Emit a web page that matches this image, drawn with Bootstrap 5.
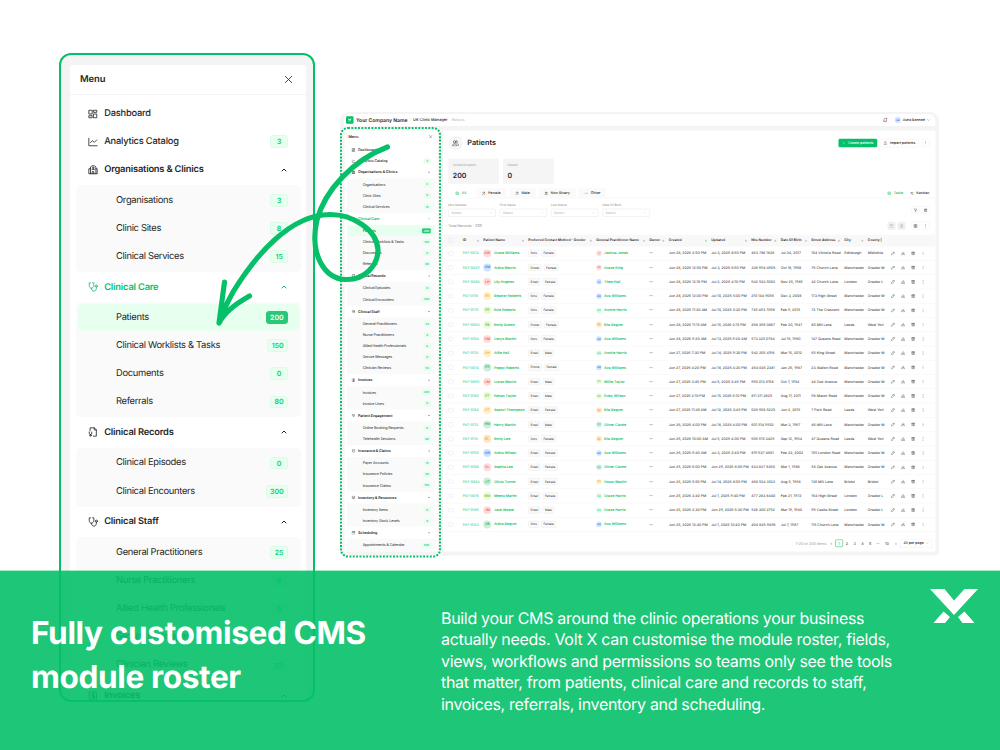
<!DOCTYPE html>
<html lang="en">
<head>
    <meta charset="UTF-8">
    <title>Volt X - Module Roster</title>
    <meta name="viewport" content="width=device-width, initial-scale=1">

    <!-- Bootstrap CSS -->
    <link href="https://cdn.jsdelivr.net/npm/bootstrap@5.3.2/dist/css/bootstrap.min.css" rel="stylesheet">

    <style>
        :root {
            --brand: #05c068;
            --ink: #262626;
            --shell: #f4f4f4;
        }

        body {
            font-family: Inter, 'Liberation Sans', sans-serif;
            color: var(--ink);
            background: #fff;
            text-rendering: geometricPrecision;
        }

        svg { display: block; flex: none; }

        .ico {
            fill: none;
            stroke: currentColor;
            stroke-width: 1.8;
            stroke-linecap: round;
            stroke-linejoin: round;
        }

        .stage { width: 1000px; height: 750px; }

        /* Side menu, sized in em so it can be shown at two scales */
        .side-menu { background: #fff; width: 23.6em; line-height: 1; }
        .menu-top { height: 3.05em; padding: .1em 1.25em 0 1em; border-bottom: .1em solid #f3f3f3; }
        .menu-top span { font-size: .94em; font-weight: 600; letter-spacing: -.01em; }
        .menu-top .ico { width: 1.1em; height: 1.1em; }
        .menu-list { padding: .45em .55em 0; }
        .menu-row { height: 2.815em; padding: 0 1.23em 0 1.2em; }
        .menu-row .ico { width: 1em; height: 1em; stroke-width: 2; }
        .menu-row .ico.chev { width: .6em; height: .6em; margin-right: .13em; stroke-width: 4; }
        .menu-label { font-size: .93em; font-weight: 500; margin-left: .72em; flex: 1; letter-spacing: -.022em; white-space: nowrap; }
        .menu-row.has-sub .menu-label { font-weight: 600; letter-spacing: -.02em; }
        .menu-row.current { color: var(--brand); }
        .menu-group { background: #fafafa; border-radius: .5em; padding: .15em 0; margin: .1em 0; }
        .menu-group .menu-row { padding-left: 4.05em; }
        .menu-group .menu-label { font-weight: 400; margin-left: 0; font-size: .94em; letter-spacing: -.034em; }
        .menu-group .menu-row.active { background: #e6ffef; border-radius: .5em; margin: 0 .2em; padding-left: 3.85em; padding-right: 1.03em; height: 2.75em; }
        .count {
            font-size: .7em;
            font-weight: 600;
            height: 1.8em;
            min-width: 2.6em;
            padding: 0 .5em;
            color: #16c96f;
            background: #e6ffef;
            border: .1em solid #dcfbe8;
            border-radius: .4em;
        }
        .active .count { background: #28c878; color: #fff; border-color: #28c878; }

        /* Enlarged menu */
        .zoom-panel {
            left: 59px; top: 53px; width: 256px; height: 648.5px;
            border: 2px solid var(--brand);
            border-radius: 12px;
            background: var(--shell);
            padding: 9.5px 0 0 9px;
        }
        .zoom-panel .side-menu { font-size: 10px; height: 640px; border-radius: 3px 3px 0 0; }

        /* Application window: laid out four times larger, then scaled down so hairlines stay thin */
        .app-scale { left: 340px; top: 112px; transform: scale(.25); transform-origin: 0 0; }
        .app-window {
            zoom: 4;
            width: 599px; height: 443.5px;
            background: var(--shell);
            border-radius: 9px 9px 4px 4px;
            padding: 2px 3.5px 3px 4px;
            font-size: 3.5px;
            line-height: 1;
        }
        .app-bar { height: 12px; background: #fff; border-radius: 7px 7px 0 0; padding: 0 5.5px 0 2px; }
        .app-body { margin-top: 4.5px; }
        .app-window .side-menu { font-size: 3.955px; height: 421px; margin-left: .5px; overflow: hidden; }
        .brand-tile { width: 7.5px; height: 7.5px; background: var(--brand); border-radius: 1.2px; }
        .company { font-size: 5.05px; font-weight: 600; margin-left: 2.5px; width: 54.5px; border-right: .5px solid #eee; white-space: nowrap; }
        .manager { font-size: 3.9px; font-weight: 500; margin-left: 2.5px; width: 39px; white-space: nowrap; }
        .crumb { color: #aaa; font-size: 3.3px; }
        .account { gap: 2px; font-size: 3.5px; font-weight: 500; }
        .face { border-radius: 50%; flex: none; font-weight: 500; }
        .work { background: #fff; width: 492.5px; height: 421px; margin-left: 5.5px; }
        .work-title { height: 25px; padding: 0 6px 0 5px; }
        .work-title .page-name { font-size: 7.3px; font-weight: 600; margin-left: 4.5px; }
        .round-ico { width: 14.5px; height: 14.5px; border-radius: 50%; background: #f6f6f6; }
        .btn-mini {
            font-size: 3.5px; line-height: 1; height: 8.6px; padding: 0 3.2px;
            border: .5px solid #eee; border-radius: 1.2px; font-weight: 500;
            display: inline-flex; align-items: center; gap: 2.6px; color: var(--ink);
            white-space: nowrap;
        }
        .btn-mini.go { background: var(--brand); border-color: var(--brand); color: #fff; }
        .box-btn { width: 8px; height: 8px; border: .5px solid #eee; border-radius: 1.2px; }
        .box-btn.off { background: #f1f1f1; color: #aaa; }
        .stat-row { padding: 3px 0 0 5px; gap: 4px; }
        .stat { width: 50.7px; height: 25.2px; background: #f5f5f5; border-radius: 1.5px; padding: 4.4px 4.5px; }
        .stat small { font-size: 3.1px; color: #999; display: block; }
        .stat b { font-size: 7px; font-weight: 600; display: block; margin-top: 5.5px; }
        .filter-tabs { height: 10px; margin-top: 4.5px; border-bottom: .5px solid #f0f0f0; padding: 0 6px 0 5px; gap: 3.2px; }
        .filter-tab { height: 10px; background: #fafafa; font-size: 3.6px; border-radius: 1.5px 1.5px 0 0; gap: 2.5px; font-weight: 500; }
        .filter-tab.on, .view-on { color: var(--brand); }
        .pick-row { padding: 5.5px 6px 0 5px; gap: 4px; height: 18.7px; }
        .pick { width: 47.4px; }
        .pick label { font-size: 3.1px; color: #888; display: block; height: 5px; line-height: 3px; }
        .pick div { height: 8px; border: .5px solid #e6e6e6; border-radius: 1px; padding: 0 3px 0 2.5px; color: #b5b5b5; font-size: 3.5px; }
        .total-row { padding: 0 6px 0 5px; height: 17.8px; color: #888; font-size: 3.6px; }

        /* Patient table */
        .trow {
            display: grid;
            grid-template-columns: 15.5px 20.5px 45px 68px 53px 19.5px 42.5px 40px 29.5px 30.5px 33px 23.5px 17.5px 52px;
            height: 14.27px;
            align-items: center;
            padding-left: 2px;
            border-bottom: .5px solid #f4f4f4;
            white-space: nowrap;
            font-size: 3.55px;
        }
        .trow > div { padding-left: 2px; }
        .trow.head-row { height: 11.7px; background: #f8f8f8; font-weight: 600; font-size: 3.35px; border: 0; }
        .head-row > div { display: flex; align-items: center; justify-content: space-between; padding-right: 2px; }
        .tick { width: 4.4px; height: 4.4px; border: .5px solid #e4e4e4; border-radius: .8px; margin-left: 3.2px; }
        .link-green { color: #10c46b; }
        .chip { border: .5px solid #ededed; background: #fafafa; border-radius: 1px; padding: 1.1px 1.8px; font-size: 3px; margin-right: 2.2px; }
        .pager { height: 14px; margin-top: 4.5px; padding-right: 3px; font-size: 3.7px; }
        .pager span { width: 7.8px; text-align: center; }
        .pager .total-note { width: auto; color: #999; margin-right: 1px; }
        .pager .ten { width: 10px; }
        .pager .now { border: .5px solid var(--brand); border-radius: 1px; color: var(--brand); height: 7.6px; line-height: 6.6px; }

        .over { left: 0; top: 0; }

        /* Bottom banner */
        .banner {
            left: 0; top: 570px; width: 1000px; height: 180px;
            background: rgba(5, 192, 104, .9);
            background-clip: padding-box;
            border-top: 1px solid rgba(5, 192, 104, .35);
            color: #fff;
            padding: 0 22px 0 31px;
        }
        .banner h1 { font-size: 31.6px; font-weight: 700; line-height: 43.5px; width: 410px; margin: 40px 0 0; letter-spacing: -.012em; }
        .banner p { font-size: 16px; line-height: 21.5px; margin: 36.5px 0 0; letter-spacing: -.02em; white-space: nowrap; }
        .banner svg { margin-top: 18px; }
    </style>
</head>

<body>

<!-- Icon set -->
<svg width="0" height="0" class="position-absolute">
    <symbol id="i-x" viewBox="0 0 24 24"><path d="M5 5l14 14M19 5L5 19"/></symbol>
    <symbol id="i-dash" viewBox="0 0 24 24"><path d="M3 3h7v9H3zM14 3h7v5h-7zM14 12h7v9h-7zM3 16h7v5H3z"/></symbol>
    <symbol id="i-chart" viewBox="0 0 24 24"><path d="M2 3v18h20M6 13l5-4 4 4 6-6"/></symbol>
    <symbol id="i-org" viewBox="0 0 24 24"><path d="M6 21V5l3-3h7l3 3v16M6 9H2v12h20V9h-3M10 21v-5h4v5M10 7h5M10 11h5M12.500 5v4"/></symbol>
    <symbol id="i-steth" viewBox="0 0 24 24"><path d="M6 2H3v6c0 4 2 7 5 7s6-3 6-7V2h-3M8 15c0 4 3 7 6 7s6-3 6-6v-3"/><circle cx="20" cy="10" r="2.500"/></symbol>
    <symbol id="i-file" viewBox="0 0 24 24"><path d="M5 9V2h10l5 5v15h-7M15 2v5h5M3 12v3c0 4 6 4 6 0v-3M6 18v1"/><circle cx="6" cy="20" r="2"/></symbol>
    <symbol id="i-bill" viewBox="0 0 24 24"><path d="M4 2h16v20H4zM15 7H10v5h5v5H9M12 5v14"/></symbol>
    <symbol id="i-heart" viewBox="0 0 24 24"><path d="M12 20L3 11c-3-6 5-10 9-4 4-6 12-2 9 4zM7 11h10"/></symbol>
    <symbol id="i-shield" viewBox="0 0 24 24"><path d="M5 4l7-2 7 2v10c0 4-4 7-7 8-3-1-7-4-7-8zM9 11h6"/></symbol>
    <symbol id="i-box" viewBox="0 0 24 24"><path d="M12 2l9 5v10l-9 5-9-5V7zM3 7l9 5 9-5M12 12v10"/></symbol>
    <symbol id="i-cal" viewBox="0 0 24 24"><path d="M3 5h18v16H3zM3 10h18M8 2v5M16 2v5"/></symbol>
    <symbol id="i-up" viewBox="0 0 24 24"><path d="M4 16l8-8 8 8"/></symbol>
    <symbol id="i-down" viewBox="0 0 24 24"><path d="M4 8l8 8 8-8"/></symbol>
    <symbol id="i-sort" viewBox="0 0 24 24"><path d="M8 8l4-5 4 5zM8 16l4 5 4-5z"/></symbol>
    <symbol id="i-users" viewBox="0 0 24 24"><circle cx="9" cy="8" r="4"/><path d="M2 21c0-9 14-9 14 0zM15 4c5 0 5 7 1 8M18 14c3 1 4 4 4 7"/></symbol>
    <symbol id="i-user" viewBox="0 0 24 24"><circle cx="12" cy="7" r="5"/><path d="M4 22c0-10 16-10 16 0"/></symbol>
    <symbol id="i-pen" viewBox="0 0 24 24"><path d="M3 21l2-7L17 2l5 5L10 19zM14 5l5 5"/></symbol>
    <symbol id="i-save" viewBox="0 0 24 24"><path d="M12 3v12M7 10l5 5 5-5M3 15v6h18v-6"/></symbol>
    <symbol id="i-load" viewBox="0 0 24 24"><path d="M12 15V3M7 8l5-5 5 5M3 15v6h18v-6"/></symbol>
    <symbol id="i-bin" viewBox="0 0 24 24"><path d="M3 6h18M5 6v15h14V6M9 6V2h6v4M10 10v7M14 10v7"/></symbol>
    <symbol id="i-more" viewBox="0 0 24 24"><path d="M12 4v.5M12 12v.5M12 20v.5"/></symbol>
    <symbol id="i-dots" viewBox="0 0 24 24"><path d="M3 12h1M11.500 12h1M20 12h1"/></symbol>
    <symbol id="i-plus" viewBox="0 0 24 24"><path d="M12 4v16M4 12h16"/></symbol>
    <symbol id="i-bell" viewBox="0 0 24 24"><path d="M4 18h16l-2-4V9c0-8-12-8-12 0v5zM10 22h4"/><circle cx="19" cy="4" r="2" stroke="#f5494f" fill="#f5494f"/></symbol>
    <symbol id="i-grid" viewBox="0 0 24 24"><path d="M3 3h18v18H3zM3 9h18M3 15h18M10 3v18"/></symbol>
    <symbol id="i-board" viewBox="0 0 24 24"><path d="M3 4h7v8H3zM14 4h7v16h-7z"/></symbol>
    <symbol id="i-funnel" viewBox="0 0 24 24"><path d="M3 3h18l-7 9v9l-4-3v-6z"/></symbol>
    <symbol id="i-logo" viewBox="0 0 48 34"><path fill="currentColor" d="M0 0h14.500l9.500 11.500L34.500 0H48L24 26zM3.500 34l10-11.500 6.500 5.500-5 6zM44.500 34l-10-11.500-6.500 5.500 4.500 6z"/></symbol>
</svg>

<div class="stage position-relative overflow-hidden">

    <div class="app-scale position-absolute">
        <div class="app-window">
            <div class="app-bar d-flex align-items-center">
                <div class="brand-tile d-flex align-items-center justify-content-center text-white"><svg width="4.400" height="3.400"><use href="#i-logo"/></svg></div>
                <span class="company">Your Company Name</span>
                <span class="manager">UK Clinic Manager</span>
                <span class="crumb">Patients</span>
                <div class="account d-flex align-items-center ms-auto" id="account"></div>
            </div>
            <div class="app-body d-flex">
                <div class="side-menu" data-menu="full"></div>
                <div class="work">
                    <div class="work-title d-flex align-items-center">
                        <div class="round-ico d-flex align-items-center justify-content-center"><svg class="ico" width="7" height="7"><use href="#i-users"/></svg></div>
                        <span class="page-name">Patients</span>
                        <div class="d-flex ms-auto" id="topActions" style="gap:2.5px"></div>
                    </div>
                    <div class="stat-row d-flex">
                        <div class="stat"><small>United Kingdom</small><b>200</b></div>
                        <div class="stat"><small>Ireland</small><b>0</b></div>
                    </div>
                    <div class="filter-tabs d-flex" id="tabs"></div>
                    <div class="pick-row d-flex" id="picks"></div>
                    <div class="total-row d-flex align-items-center" id="total"></div>
                    <div id="table"></div>
                    <div class="pager d-flex align-items-center justify-content-end">
                        <span class="total-note">1-20 of 200 items</span>
                        <span>‹</span><span class="now">1</span><span>2</span><span>3</span><span>4</span><span>5</span><span>···</span><span class="ten">10</span><span>›</span>
                        <div class="btn-mini">20 per page <svg class="ico" width="2.500" height="2.500"><use href="#i-down"/></svg></div>
                    </div>
                </div>
            </div>
        </div>
    </div>

    <div class="zoom-panel position-absolute overflow-hidden">
        <div class="side-menu" data-menu="short"></div>
    </div>

    <!-- Callout outline and arrow -->
    <svg class="over position-absolute" width="1000" height="750" fill="none" stroke="#05c068">
        <rect x="341" y="128" width="99" height="428.500" rx="7" stroke-width="2" stroke-dasharray="1.900 1.450"/>
        <path d="M387.500 147C353 160 325 190 317 220C309 255 325 279 346 279.500C365 280 378 265 378 250C377 229 352 214.500 330 214.500C290 214.500 255 256 233 292C227 303 222 313 219 323M224.500 282L219 323C225 311 237 303 249.500 296" stroke-width="5.200" stroke-linecap="round" stroke-linejoin="round"/>
    </svg>

    <div class="banner position-absolute d-flex align-items-start">
        <h1>Fully customised CMS<br>module roster</h1>
        <p>Build your CMS around the clinic operations your business<br>actually needs. Volt X can customise the module roster, fields,<br>views, workflows and permissions so teams only see the tools<br>that matter, from patients, clinical care and records to staff,<br>invoices, referrals, inventory and scheduling.</p>
        <svg class="ms-auto" width="48" height="34"><use href="#i-logo"/></svg>
    </div>
</div>

<!-- Bootstrap JS Bundle -->
<script src="https://cdn.jsdelivr.net/npm/bootstrap@5.3.2/dist/js/bootstrap.bundle.min.js"></script>

<script>
    const icon = (name, size, cls = '') =>
        `<svg class="ico ${cls}" ${size ? `width="${size}" height="${size}"` : ''}><use href="#i-${name}"/></svg>`;

    const menu = [
        ['dash', 'Dashboard'],
        ['chart', 'Analytics Catalog', 3],
        ['org', 'Organisations & Clinics', [['Organisations', 3], ['Clinic Sites', 8], ['Clinical Services', 15]]],
        ['steth', 'Clinical Care', [['Patients', 200], ['Clinical Worklists & Tasks', 150], ['Documents', 0], ['Referrals', 80]]],
        ['file', 'Clinical Records', [['Clinical Episodes', 0], ['Clinical Encounters', 300]]],
        ['steth', 'Clinical Staff', [['General Practitioners', 25], ['Nurse Practitioners', 8], ['Allied Health Professionals', 6], ['Secure Messages', 0], ['Clinician Reviews', 53]]],
        ['bill', 'Invoices', [['Invoices', 200], ['Invoice Lines', 0]]],
        ['heart', 'Patient Engagement', [['Online Booking Requests', 0], ['Telehealth Sessions', 80]]],
        ['shield', 'Insurance & Claims', [['Payer Accounts', 15], ['Insurance Policies', 50], ['Insurance Claims', 150]]],
        ['box', 'Inventory & Resources', [['Inventory Items', 0], ['Inventory Stock Levels', 0]]],
        ['cal', 'Scheduling', [['Appointments & Calendar', 500]]]
    ];

    const count = n => `<span class="count d-flex align-items-center justify-content-center">${n}</span>`;

    function menuHtml(items) {
        const rows = items.map(([ic, label, extra]) => {
            const sub = Array.isArray(extra);
            const end = sub ? icon('up', 0, 'chev') : (extra === undefined ? '' : count(extra));
            let html = `<div class="menu-row d-flex align-items-center ${sub ? 'has-sub' : ''} ${label === 'Clinical Care' ? 'current' : ''}">
                ${icon(ic)}<span class="menu-label">${label}</span>${end}</div>`;
            if (sub && extra.length) {
                html += '<div class="menu-group">' + extra.map(([t, n]) =>
                    `<div class="menu-row d-flex align-items-center ${t === 'Patients' ? 'active' : ''}"><span class="menu-label">${t}</span>${count(n)}</div>`
                ).join('') + '</div>';
            }
            return html;
        }).join('');
        return `<div class="menu-top d-flex align-items-center justify-content-between"><span>Menu</span>${icon('x')}</div><div class="menu-list">${rows}</div>`;
    }

    // The enlarged panel ends at the Invoices heading
    const shortMenu = [...menu.slice(0, 6), ['bill', 'Invoices', []]];
    document.querySelectorAll('[data-menu]').forEach(el =>
        el.innerHTML = menuHtml(el.dataset.menu === 'short' ? shortMenu : menu));

    // Avatar palettes: [background, text]
    const tones = {
        r: ['#ffdcdc', '#f5494f'], b: ['#cfe2ff', '#2774f5'], y: ['#fff0c9', '#f5ad1d'],
        l: ['#eafbd6', '#72c62e'], g: ['#cdeeda', '#25b56b'], o: ['#ffe5bd', '#f39b22'], m: ['#d9fae6', '#21c773']
    };
    const initials = n => n.split(' ').map(w => w[0]).join('');
    const face = (name, tone, size) =>
        `<span class="face d-inline-flex align-items-center justify-content-center" style="width:${size}px;height:${size}px;background:${tones[tone][0]};color:${tones[tone][1]};font-size:${size * .42}px">${initials(name)}</span>`;

    document.getElementById('account').innerHTML =
        icon('bell', 5) + '<span style="width:3px"></span>' + face('Asha Bennett', 'b', 6) + '<span>Asha Bennett</span>' + icon('down', 3);

    document.getElementById('topActions').innerHTML =
        `<div class="btn-mini go">${icon('plus', 3)}Create patients</div>
         <div class="btn-mini">${icon('load', 4)}Import patients</div>
         <div class="box-btn d-flex align-items-center justify-content-center">${icon('more', 4)}</div>`;

    const tabs = [['grid', 'All', 25], ['user', 'Female', 29.5], ['user', 'Male', 26.5], ['users', 'Non Binary', 36.5], ['dots', 'Other', 27.5]];
    document.getElementById('tabs').innerHTML = tabs.map(([ic, t, w], i) =>
        `<div class="filter-tab d-flex align-items-center justify-content-center ${i ? '' : 'on bg-white'}" style="width:${w}px">${icon(ic, 4)}${t}</div>`
    ).join('') +
        `<div class="filter-tab bg-white ms-auto d-flex align-items-center view-on">${icon('grid', 4)}Table</div>
         <div class="filter-tab bg-white d-flex align-items-center ms-1">${icon('board', 3.5)}Kanban</div>`;

    const box = (ic, off = '') => `<div class="box-btn d-flex align-items-center justify-content-center ${off}">${icon(ic, 4.2)}</div>`;
    document.getElementById('picks').innerHTML = ['Nhs Number', 'First Name', 'Last Name', 'Date Of Birth'].map(t =>
        `<div class="pick"><label>${t}</label><div class="d-flex align-items-center justify-content-between">Select${icon('down', 3)}</div></div>`
    ).join('') + `<div class="d-flex ms-auto align-items-center" style="gap:2px">${box('funnel')}${box('bin')}</div>`;

    document.getElementById('total').innerHTML =
        `<span class="me-auto">Total Records - 200</span><div class="d-flex text-dark" style="gap:2px">${box('cal', 'off')}${box('bill', 'off')}<i style="width:2px"></i>${box('grid')}${box('more')}</div>`;

    const heads = ['', 'ID', 'Patient Name', 'Preferred Contact Method - Gender', 'General Practitioner Name', 'Owner', 'Created', 'Updated', 'Nhs Number', 'Date Of Birth', 'Street Address', 'City', 'County |', ''];
    const patients = `0013|Grace Williams|r|Sms|Female|Joshua Jones|r|Jun 28, 2026 2:50 PM|Jul 3, 2026 8:50 PM|463 788 1828|Jul 24, 2017|104 Victoria Road|Edinburgh|Midlothia
0029|Aisha Morris|b|Postal|Female|Grace King|r|Jun 28, 2026 12:50 PM|Jul 3, 2026 6:50 PM|336 994 4905|Oct 18, 1968|76 Church Lane|Manchester|Greater M
0088|Lily Hughes|r|Email|Female|Theo Hall|b|Jun 28, 2026 12:10 PM|Jul 2, 2026 4:10 PM|642 533 5002|Nov 25, 1985|42 Church Lane|London|Greater L
0118|Eleanor Roberts|y|Sms|Female|Ava Williams|b|Jun 28, 2026 12:00 PM|Jul 10, 2026 5:00 PM|210 144 9056|Dec 3, 2008|173 High Street|Manchester|Greater M
0176|Evie Roberts|l|Sms|Female|Archie Harris|m|Jun 28, 2026 11:30 AM|Jul 10, 2026 5:30 PM|735 493 7098|Feb 9, 2015|72 The Crescent|Manchester|Greater M
0094|Emily Brown|l|Postal|Female|Ella Begum|o|Jun 28, 2026 11:15 AM|Jul 15, 2026 2:15 PM|268 398 0887|Feb 20, 1947|80 Mill Lane|Leeds|West Yorl
0164|Cerys Martin|r|Sms|Female|Ava Williams|b|Jun 28, 2026 9:20 AM|Jul 13, 2026 9:20 AM|573 325 0784|Jul 16, 1980|147 Queens Road|Manchester|Greater M
0174|Alfie Hall|y|Email|Male|Archie Harris|m|Jun 27, 2026 7:30 PM|Jul 14, 2026 9:30 PM|542 205 4198|Mar 15, 2012|65 King Street|Manchester|Greater M
0014|Poppy Roberts|g|Phone|Female|Ava Williams|b|Jun 27, 2026 4:20 PM|Jul 18, 2026 4:20 PM|454 045 2381|Jan 25, 1987|23 Station Road|Manchester|Greater M
0095|Lucas Morris|r|Email|Male|Millie Taylor|l|Jun 27, 2026 3:45 PM|Jul 5, 2026 3:45 PM|965 013 6158|Oct 7, 1954|44 Oak Avenue|Manchester|Greater M
0185|Rohan Taylor|l|Email|Male|Ruby Wilson|l|Jun 27, 2026 2:10 PM|Jul 15, 2026 6:10 PM|811 311 2825|Aug 17, 2011|98 Manor Road|Manchester|Greater M
0182|Saanvi Thompson|y|Email|Female|Ella Begum|o|Jun 27, 2026 11:45 AM|Jul 12, 2026 3:45 PM|026 658 5225|Jun 2, 2015|7 Park Road|Leeds|West Yorl
0113|Harry Martin|g|Email|Male|Oliver Clarke|g|Jun 26, 2026 4:00 PM|Jul 18, 2026 4:00 PM|601 514 9552|Mar 3, 1967|46 Mill Lane|Manchester|Greater M
0112|Emily Lee|o|Sms|Female|Ella Begum|o|Jun 26, 2026 10:00 AM|Jul 5, 2026 4:00 PM|605 515 3425|Sep 12, 1964|47 Queens Road|Leeds|West Yorl
0155|Aisha Wilson|b|Email|Female|Ava Williams|b|Jun 26, 2026 9:40 AM|Jul 3, 2026 2:40 PM|819 537 4681|Feb 22, 2002|155 London Road|Manchester|Greater M
0108|Sophia Lee|r|Email|Female|Oliver Clarke|g|Jun 25, 2026 6:00 PM|Jun 29, 2026 8:00 PM|833 827 8260|Mar 1, 1988|58 Oak Avenue|Manchester|Greater M
0084|Olivia Turner|g|Email|Female|Oscar Martin|y|Jun 25, 2026 5:50 PM|Jul 14, 2026 8:50 PM|468 524 3522|Aug 5, 1968|136 Mill Lane|Bristol|Bristol
0016|Meera Martin|l|Email|Female|Grace Harris|m|Jun 25, 2026 3:40 PM|Jul 1, 2026 9:40 PM|477 283 8440|Feb 21, 1972|164 High Street|London|Greater L
0185|Jack Moore|r|Email|Male|Grace Harris|m|Jun 25, 2026 2:30 PM|Jun 29, 2026 5:30 PM|528 300 2752|Mar 19, 1940|96 Castle Street|London|Greater L
0123|Aisha Begum|g|Sms|Female|Ava Williams|b|Jun 25, 2026 12:40 PM|Jul 1, 2026 12:40 PM|404 826 9498|Jul 7, 1987|115 Church Lane|Manchester|Greater M`.split('\n').map(l => l.split('|'));

    document.getElementById('table').innerHTML =
        '<div class="trow head-row">' + heads.map((h, i) =>
            i === 0 ? '<div class="p-0"><span class="tick"></span></div>' : `<div>${h}${h && i < 12 ? icon('sort', 2.8, i === 6 ? 'link-green' : 'text-secondary') : ''}</div>`
        ).join('') + '</div>' +
        patients.map(([id, name, tone, via, sex, gp, gpTone, ...rest]) =>
            `<div class="trow"><div class="p-0"><div class="tick"></div></div><div class="link-green">PAT-${id}</div>
            <div class="d-flex align-items-center link-green fw-semibold" style="gap:2.6px">${face(name, tone, 8)}${name}</div>
            <div><span class="chip">${via}</span><span class="chip">${sex}</span></div>
            <div class="d-flex align-items-center link-green fw-semibold" style="gap:2.4px">${face(gp, gpTone, 5.4)}${gp}</div>
            <div>—</div>${rest.map(v => `<div>${v}</div>`).join('')}
            <div class="d-flex" style="gap:5.8px;padding-left:7.500px">${icon('pen', 4.3)}${icon('save', 4.3)}${icon('bin', 4.3)}${icon('more', 4.3)}</div></div>`
        ).join('');
</script>

</body>
</html>
